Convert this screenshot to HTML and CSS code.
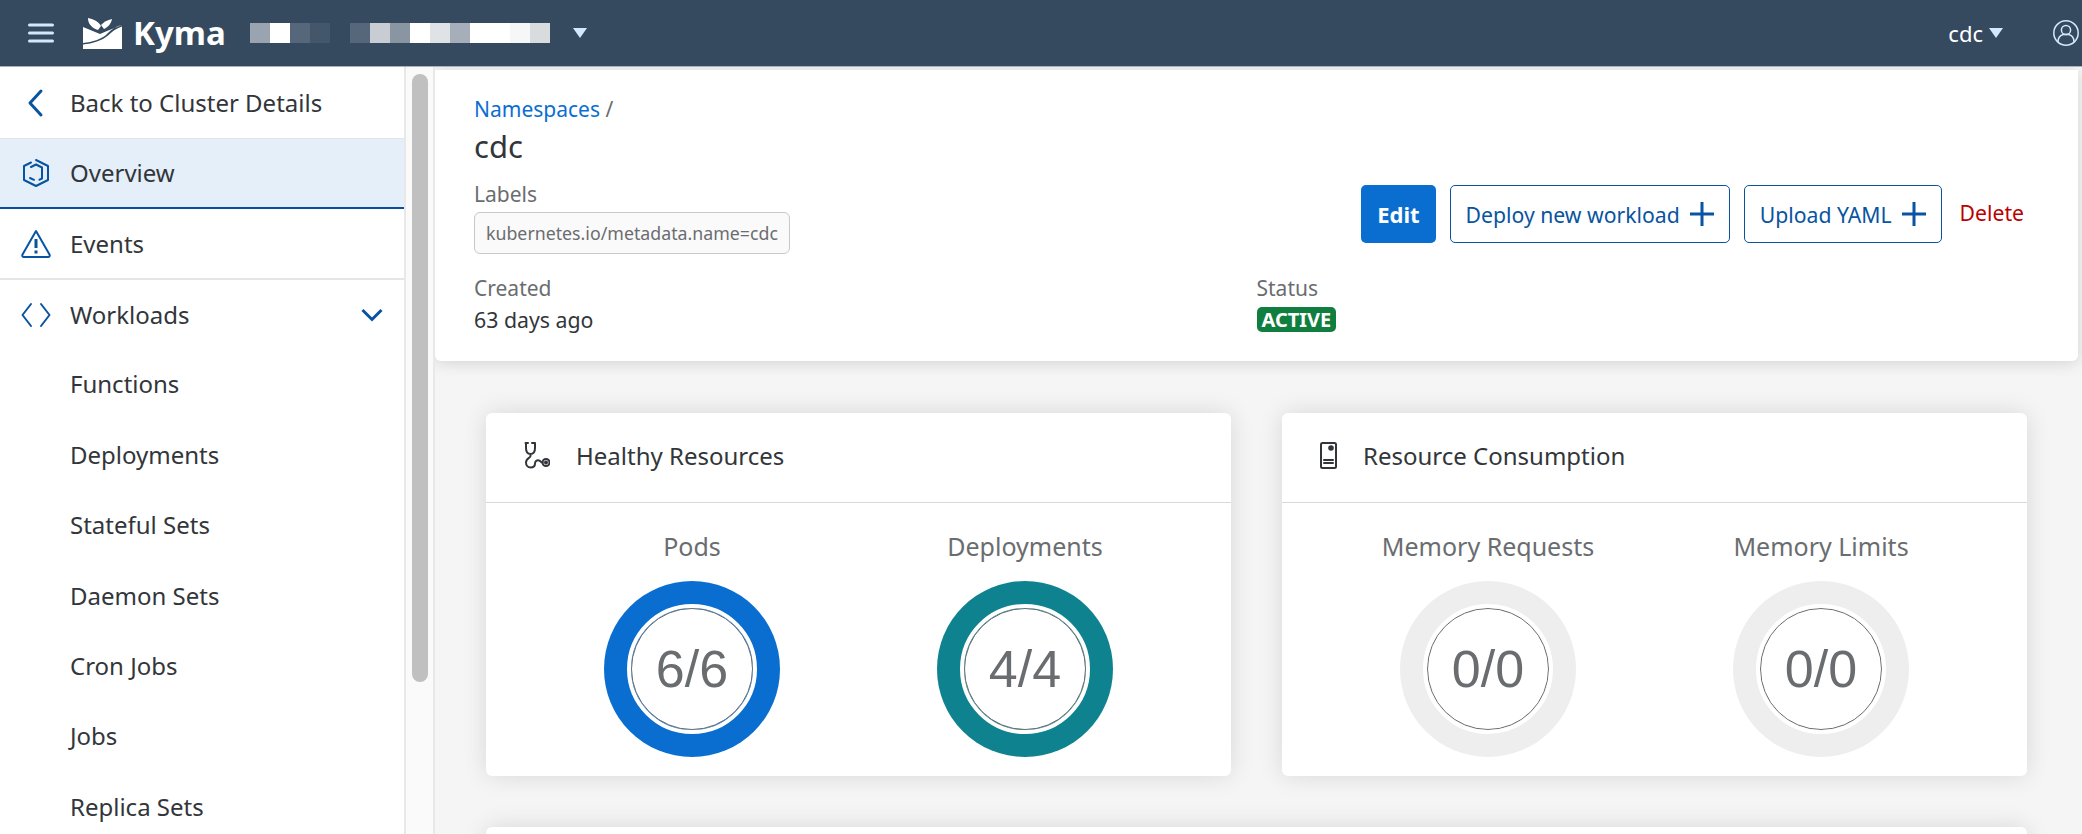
FILE: index.html
```html
<!DOCTYPE html>
<html lang="en">
<head>
    <meta charset="UTF-8">
    <meta name="viewport" content="width=device-width, initial-scale=1.0">
    <title>Kyma - cdc</title>
    <link rel="stylesheet" href="styles.css">
</head>
<body>

    <header class="shell-bar">
        <div class="shell-left">
            <svg class="shell-menu" viewBox="0 0 26 20"><path d="M1.500 2h23M1.500 10h23M1.500 18h23"/></svg>
            <svg class="shell-logo" viewBox="0 0 39 31"><path d="M5 0c5 1 10 3 13 8l-3 4C9 10 5 6 5 0z"/><path d="M18 7c3-3 6-5 11-6-1 5-4 8-8 10z"/><path d="M0 9l17 7 7-3 15-6c-8 2-12 6-16 10-5 4-13 7-23 8z"/><path d="M0 26.500c10-1 19-4 25-9 4-4 8-7 14-9V31H0z"/></svg>
            <span class="shell-title">Kyma</span>
            <div class="blur-group">
                <i class="b1"></i><i class="b2"></i><i class="b3"></i><i class="b4"></i>
            </div>
            <div class="blur-group">
                <i class="b3"></i><i class="b5"></i><i class="b6"></i><i class="b2"></i><i class="b7"></i><i class="b8"></i><i class="b2"></i><i class="b2"></i><i class="b9"></i><i class="b10"></i>
            </div>
            <span class="caret"></span>
        </div>
        <div class="shell-right">
            <span class="shell-ns">cdc</span>
            <span class="caret caret-ns"></span>
            <svg class="shell-user" viewBox="0 0 26 26"><circle cx="13" cy="13" r="12.200"/><circle cx="13" cy="10" r="4.600"/><path d="M5 22c0-5 3-7 5.500-7.500h5C18 15 21 17 21 22"/></svg>
        </div>
    </header>

    <div class="app-body">
        <aside class="sidebar">
            <nav class="side-nav">
                <a class="nav-item nav-back">
                    <svg class="nav-icon" viewBox="0 0 30 30"><path d="M20 3L9 15l11 12"/></svg>
                    <span>Back to Cluster Details</span>
                </a>
                <a class="nav-item nav-active">
                    <svg class="nav-icon" viewBox="0 0 30 30"><path d="M15 2l12 6v14l-12 6-12-6V8l7-3.500M10 9l5-2.500 6 3v11l-2.500 1.200M9 20l4 1.800"/></svg>
                    <span>Overview</span>
                </a>
                <a class="nav-item nav-line">
                    <svg class="nav-icon" viewBox="0 0 30 30"><path d="M15 2L1.500 25.500c-.6 1.200 0 2.500 1.500 2.500h24c1.500 0 2.100-1.300 1.500-2.500z"/><path class="bold" d="M15 10v9M15 21.500v3"/></svg>
                    <span>Events</span>
                </a>
                <a class="nav-item">
                    <svg class="nav-icon" viewBox="0 0 30 30"><path d="M10 4L1.500 15 10 26M20 4l8.500 11L20 26"/></svg>
                    <span>Workloads</span>
                    <svg class="nav-chevron" viewBox="0 0 22 14"><path d="M1.500 2L11 11.500 20.500 2"/></svg>
                </a>
                <a class="nav-item nav-sub">Functions</a>
                <a class="nav-item nav-sub">Deployments</a>
                <a class="nav-item nav-sub">Stateful Sets</a>
                <a class="nav-item nav-sub">Daemon Sets</a>
                <a class="nav-item nav-sub">Cron Jobs</a>
                <a class="nav-item nav-sub">Jobs</a>
                <a class="nav-item nav-sub">Replica Sets</a>
            </nav>
            <div class="side-scroll"><div class="side-thumb"></div></div>
        </aside>

        <main class="content">
            <section class="page-head">
                <div class="breadcrumb"><a>Namespaces</a> /</div>
                <h1>cdc</h1>
                <div class="head-row">
                    <div>
                        <div class="field-label">Labels</div>
                        <span class="label-chip">kubernetes.io/metadata.name=cdc</span>
                    </div>
                    <div class="actions">
                        <button class="btn btn-primary">Edit</button>
                        <button class="btn btn-outline">Deploy new workload
                            <svg viewBox="0 0 24 24"><path d="M12 0v24M0 12h24"/></svg>
                        </button>
                        <button class="btn btn-outline">Upload YAML
                            <svg viewBox="0 0 24 24"><path d="M12 0v24M0 12h24"/></svg>
                        </button>
                        <button class="btn btn-delete">Delete</button>
                    </div>
                </div>
                <div class="head-meta">
                    <div>
                        <div class="field-label">Created</div>
                        <div class="field-value">63 days ago</div>
                    </div>
                    <div>
                        <div class="field-label">Status</div>
                        <span class="badge">ACTIVE</span>
                    </div>
                </div>
            </section>

            <div class="card-grid">
                <section class="card">
                    <div class="card-head">
                        <svg class="card-icon" viewBox="0 0 26 27"><path d="M1.500 1H4v0M8 1h3M2 1v5c0 4 2 6 4.500 6S11 10 11 6V1M6.500 12v2c0 2-4.500 2-4.500 6.500C2 23.500 4 25.500 6.500 25.500S11 24 11 21.500s2-3.500 4-3 1.500 2 3.500 2"/><circle cx="22" cy="20.500" r="3.500"/><circle class="dot" cx="22" cy="20.500" r="1"/></svg>
                        <h2>Healthy Resources</h2>
                    </div>
                    <div class="card-body">
                        <div class="stat">
                            <div class="stat-label">Pods</div>
                            <div class="donut donut-blue"><div class="donut-inner">6/6</div></div>
                        </div>
                        <div class="stat">
                            <div class="stat-label">Deployments</div>
                            <div class="donut donut-teal"><div class="donut-inner">4/4</div></div>
                        </div>
                    </div>
                </section>

                <section class="card">
                    <div class="card-head">
                        <svg class="card-icon card-icon-narrow" viewBox="0 0 17 27"><rect x="1" y="1" width="15" height="25" rx="1.500"/><path d="M4 18h9M4 21h9"/><circle class="dot" cx="11" cy="6" r="1.800"/></svg>
                        <h2>Resource Consumption</h2>
                    </div>
                    <div class="card-body">
                        <div class="stat">
                            <div class="stat-label">Memory Requests</div>
                            <div class="donut"><div class="donut-inner">0/0</div></div>
                        </div>
                        <div class="stat">
                            <div class="stat-label">Memory Limits</div>
                            <div class="donut"><div class="donut-inner">0/0</div></div>
                        </div>
                    </div>
                </section>

                <section class="card card-wide"></section>
            </div>
        </main>
    </div>

</body>
</html>
```

FILE: styles.css
```css
/* Kyma namespace overview */
html, body {
    height: 100%;
}

body {
    margin: 0;
    overflow: hidden;
    font-family: "Noto Sans", Arial, sans-serif;
    color: #32363a;
    background-color: #f5f5f5;
}

svg {
    fill: none;
    stroke: currentColor;
    flex: none;
}

/* Shell bar */
.shell-bar {
    height: 66px;
    display: flex;
    justify-content: space-between;
    align-items: center;
    background-color: #354a5f;
    border-bottom: 1px solid #a9b2bb;
    position: relative;
    z-index: 2;
}

.shell-left,
.shell-right {
    display: flex;
    align-items: center;
}

.shell-menu {
    width: 26px;
    height: 20px;
    margin-left: 28px;
    color: #d1e8ff;
    stroke-width: 3;
    stroke-linecap: round;
}

.shell-logo {
    width: 39px;
    height: 31px;
    margin-left: 29px;
    fill: #fff;
    stroke: none;
}

.shell-title {
    margin-left: 11px;
    font-size: 33px;
    line-height: 40px;
    font-weight: 700;
    color: #fff;
}

.blur-group {
    display: flex;
    margin-left: 24px;
    height: 20px;
}

.blur-group + .blur-group {
    margin-left: 20px;
}

.blur-group i {
    width: 20px;
    height: 20px;
}

.b1 { background-color: #9aa4b0; }
.b2 { background-color: #fff; }
.b3 { background-color: #56677b; }
.b4 { background-color: #445669; }
.b5 { background-color: #c8cdd4; }
.b6 { background-color: #8a95a2; }
.b7 { background-color: #e0e3e6; }
.b8 { background-color: #a6aeb9; }
.b9 { background-color: #f6f7f7; }
.b10 { background-color: #d9dcdf; }

.caret {
    width: 0;
    height: 0;
    margin-left: 23px;
    border-left: 7px solid transparent;
    border-right: 7px solid transparent;
    border-top: 10px solid #d1e8ff;
}

.caret-ns {
    margin-left: 6px;
}

.shell-ns {
    font-size: 22px;
    color: #fff;
}

.shell-user {
    width: 26px;
    height: 26px;
    margin-left: 50px;
    margin-right: 3px;
    color: #d1e8ff;
    stroke-width: 1.500;
}

/* Layout */
.app-body {
    display: flex;
    height: 767px;
}

.sidebar {
    display: flex;
    flex: none;
    width: 435px;
    overflow: hidden;
    background-color: #fff;
}

.side-nav {
    width: 404px;
    flex: none;
}

.nav-item {
    display: flex;
    align-items: center;
    height: 70.4px;
    padding-left: 70px;
    font-size: 24px;
    color: #32363a;
    box-sizing: border-box;
    position: relative;
}

.nav-sub {
    padding-bottom: 3px;
}

.nav-back {
    height: 72px;
    border-bottom: 1px solid #e5e5e5;
}

.nav-active {
    padding-bottom: 2px;
    background-color: #e5eff9;
    border-bottom: 2px solid #0a4f9e;
}

.nav-line {
    border-bottom: 2px solid #e5e5e5;
}

.nav-icon {
    position: absolute;
    left: 21px;
    top: 50%;
    width: 30px;
    height: 30px;
    margin-top: -15px;
    color: #0854a0;
    stroke-width: 2;
    stroke-linejoin: round;
    stroke-linecap: round;
}

.nav-icon .bold {
    stroke-width: 3;
    stroke-linecap: butt;
}

.nav-back .nav-icon {
    stroke-width: 3;
}

.nav-chevron {
    position: absolute;
    right: 21px;
    top: 50%;
    width: 22px;
    height: 14px;
    margin-top: -7px;
    color: #0854a0;
    stroke-width: 3;
}

.side-scroll {
    flex: none;
    width: 31px;
    padding: 7px 6px 0;
    box-sizing: border-box;
    background-color: #fafafa;
    border-left: 2px solid #e8e8e8;
    border-right: 2px solid #e8e8e8;
}

.side-thumb {
    width: 16px;
    height: 608px;
    border-radius: 8px;
    background-color: #c0c0c0;
}

.content {
    flex: 1;
    min-width: 0;
    overflow: hidden;
    padding: 3px 4px 0 0;
}

/* Page header */
.page-head {
    height: 291px;
    padding: 24px 39px 0;
    box-sizing: border-box;
    background-color: #fff;
    border-radius: 0 0 6px 6px;
    box-shadow: 0 2px 16px rgba(0, 0, 0, 0.14);
}

.breadcrumb {
    font-size: 21px;
    line-height: 30px;
    color: #6a6d70;
}

.breadcrumb a {
    color: #0a6ed1;
}

h1 {
    margin: 0;
    font-size: 31px;
    line-height: 44px;
    font-weight: 400;
    color: #32363a;
}

.head-row {
    display: flex;
    justify-content: space-between;
    align-items: flex-start;
    margin-top: 11px;
}

.field-label {
    font-size: 21px;
    line-height: 30px;
    color: #6a6d70;
}

.field-value {
    margin-top: 2px;
    font-size: 21.3px;
    line-height: 30px;
    color: #32363a;
}

.label-chip {
    display: inline-block;
    margin-top: 3px;
    padding: 0 11px;
    font-size: 17.75px;
    line-height: 40px;
    color: #6a6d70;
    background-color: #fafafa;
    border: 1px solid #c8c8c8;
    border-radius: 6px;
}

.actions {
    display: flex;
    align-items: center;
    gap: 14px;
    margin-top: 6px;
}

.btn {
    display: flex;
    align-items: center;
    height: 58px;
    padding: 0 15px;
    font-family: inherit;
    font-size: 21.2px;
    border-radius: 5px;
    background: none;
    border: 1px solid transparent;
    box-sizing: border-box;
    white-space: nowrap;
}

.btn svg {
    width: 24px;
    height: 24px;
    margin-left: 10px;
    stroke-width: 3;
}

.btn-primary {
    font-size: 22px;
    font-weight: 700;
    color: #fff;
    background-color: #0a6ed1;
}

.btn-outline {
    color: #0854a0;
    border-color: #0854a0;
    background-color: #fff;
}

.btn-delete {
    padding: 0 0 3px 3px;
    margin-right: 14px;
    color: #bb0000;
}

.head-meta {
    display: grid;
    grid-template-columns: 1fr 1fr;
    margin-top: 19px;
}

.badge {
    display: inline-block;
    margin-top: 4px;
    padding: 0 5px;
    font-size: 20px;
    line-height: 25px;
    font-weight: 700;
    color: #fff;
    background-color: #107e3e;
    border-radius: 5px;
}

/* Cards */
.card-grid {
    display: grid;
    grid-template-columns: 1fr 1fr;
    gap: 51px;
    padding: 52px 51px 0;
}

.card {
    height: 363px;
    background-color: #fff;
    border-radius: 6px;
    box-shadow: 0 0 24px rgba(0, 0, 0, 0.12);
}

.card-wide {
    grid-column: span 2;
}

.card-head {
    display: flex;
    align-items: center;
    gap: 26px;
    height: 90px;
    padding-left: 38px;
    padding-bottom: 4px;
    box-sizing: border-box;
    border-bottom: 1px solid #d9d9d9;
}

.card-head h2 {
    margin: 0;
    font-size: 24px;
    font-weight: 400;
    color: #32363a;
}

.card-icon {
    width: 26px;
    height: 27px;
    stroke-width: 2;
    stroke-linecap: round;
    color: #32363a;
}

.card-icon-narrow {
    width: 17px;
}

.card-icon .dot {
    fill: currentColor;
}

.card-body {
    display: grid;
    grid-template-columns: 333px 333px;
    justify-content: center;
    padding-top: 27px;
}

.stat {
    display: flex;
    flex-direction: column;
    align-items: center;
}

.stat-label {
    font-size: 25px;
    line-height: 32px;
    color: #6a6d70;
}

.donut {
    display: flex;
    align-items: center;
    justify-content: center;
    width: 176px;
    height: 176px;
    margin-top: 19px;
    border-radius: 50%;
    background-color: #eeeeee;
}

.donut-blue {
    background-color: #0a6ed1;
}

.donut-teal {
    background-color: #0f828f;
}

.donut-inner {
    display: flex;
    align-items: center;
    justify-content: center;
    width: 122px;
    height: 122px;
    border-radius: 50%;
    font-family: "Liberation Sans", Arial, sans-serif;
    font-size: 52px;
    color: #6a6d70;
    background-color: #fff;
    border: 1px solid #6a6d70;
    outline: 4px solid #fff;
    box-sizing: border-box;
}
```
